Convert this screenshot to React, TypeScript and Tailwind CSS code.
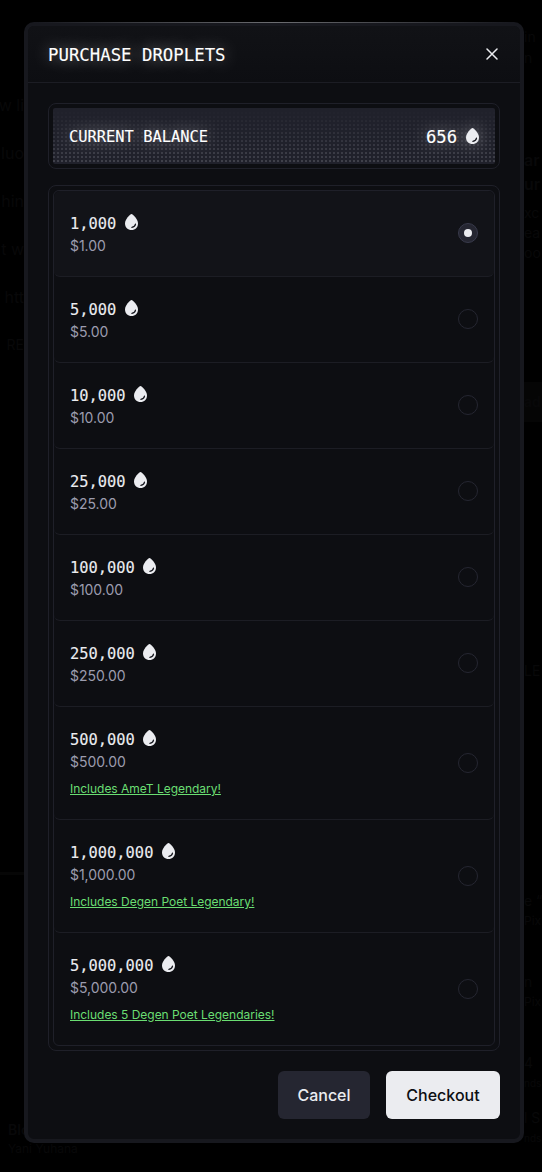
interface Pack {
  id: number
  amount: string
  price: string
  bonus?: string
}

const packs: Pack[] = [
  { id: 1, amount: '1,000', price: '$1.00' },
  { id: 2, amount: '5,000', price: '$5.00' },
  { id: 3, amount: '10,000', price: '$10.00' },
  { id: 4, amount: '25,000', price: '$25.00' },
  { id: 5, amount: '100,000', price: '$100.00' },
  { id: 6, amount: '250,000', price: '$250.00' },
  { id: 7, amount: '500,000', price: '$500.00', bonus: 'Includes AmeT Legendary!' },
  { id: 8, amount: '1,000,000', price: '$1,000.00', bonus: 'Includes Degen Poet Legendary!' },
  { id: 9, amount: '5,000,000', price: '$5,000.00', bonus: 'Includes 5 Degen Poet Legendaries!' },
]

function Droplet({ className = '' }: { className?: string }) {
  return (
    <svg className={`w-[13px] h-4 flex-shrink-0 ${className}`} viewBox="0 0 13 16" fill="none">
      <path
        d="M6.5 0C5 0.2 0 5.2 0 9.4C0 13.2 2.8 16 6.5 16S13 13.2 13 9.4C13 5.2 8 0.2 6.5 0Z"
        fill="#ebecf0"
      />
      <path d="M6.9 13.4C8.8 13.1 10.2 12 10.5 10.2" stroke="#17181f" strokeWidth={1.2} strokeLinecap="round" />
    </svg>
  )
}

function PackRow({ pack, selected }: { pack: Pack; selected: boolean }) {
  return (
    <div
      className={`flex items-center justify-between px-4 rounded-md border-b border-[#1c1d24] last:border-b-0 ${
        pack.bonus ? 'h-[113px] last:h-28' : 'h-[86px]'
      } ${selected ? 'bg-[#121318]' : ''}`}
    >
      <div className={`flex flex-col ${pack.bonus ? 'pb-px' : ''}`}>
        <div className="flex items-center gap-[8.5px] h-6">
          <span className="pt-0.5 font-['DejaVu_Sans_Mono',monospace] text-[15.4px] leading-6 text-[#ebecf0] [-webkit-text-stroke:0.12px_#ebecf0]">
            {pack.amount}
          </span>
          <Droplet className="mb-0.5" />
        </div>
        <span className="text-sm leading-[21px] tracking-[-0.05px] text-[#9c9cae]">{pack.price}</span>
        {pack.bonus && (
          <span className="-mt-px pt-2 text-xs leading-[19px] tracking-[-0.02px] text-[#6ade72] underline">
            {pack.bonus}
          </span>
        )}
      </div>
      <div
        className={`flex items-center justify-center w-5 h-5 rounded-full border ${pack.bonus ? '' : 'mb-0.5'} ${
          selected ? 'bg-[#252631] border-[#383a4b]' : 'border-[#252631]'
        }`}
      >
        {selected && <div className="w-2 h-2 rounded-full bg-[#ebecf0]" />}
      </div>
    </div>
  )
}

/* Page content dimmed behind the dialog */
function Backdrop() {
  return (
    <div className="absolute inset-0 flex justify-between overflow-hidden whitespace-nowrap text-base text-[#080809]">
      <div className="w-20 pt-[81px]">
        <div className="w-6 h-[288px] flex flex-col items-end leading-[48px]">
          <span>w li</span>
          <span>luo</span>
          <span>hin</span>
          <span>t w</span>
          <span>htt</span>
          <span className="text-sm leading-[48px]">RE</span>
        </div>
        <div className="mt-[503px] w-full h-[3px] bg-[#060606]" />
        <div className="mt-[245px] pl-2 text-sm leading-[19px]">
          <div className="font-semibold">Blo</div>
          <div className="text-xs leading-[19px]">Yani Yuhana</div>
        </div>
      </div>
      <div className="w-[18px] flex flex-col pt-[26px] text-sm">
        <span className="leading-[21px]">in</span>
        <span className="leading-[21px]">n</span>
        <span className="mt-20 text-base leading-6 font-semibold">ar</span>
        <span className="text-base leading-6 font-semibold">ur</span>
        <span className="mt-[7px] leading-5">xc</span>
        <span className="leading-5">ea</span>
        <span className="leading-5">oo</span>
        <span className="mt-[119px] h-10 leading-10 font-semibold bg-[#050505]">ad</span>
        <span className="mt-[239px] leading-5">LE</span>
        <span className="mt-[210px] leading-5">e “</span>
        <span className="text-xs leading-5">Pix</span>
        <span className="mt-[41px] leading-5">n</span>
        <span className="text-xs leading-5">Pix</span>
        <span className="mt-[41px] leading-5">4</span>
        <span className="text-[10px] leading-5">nds</span>
        <span className="mt-[15px] leading-5">l S</span>
        <span className="text-[10px] leading-5">nds</span>
      </div>
    </div>
  )
}

export default function App() {
  return (
    <div className="relative w-[542px] h-[1172px] pt-[22px] pl-6 overflow-hidden bg-black font-['Inter',sans-serif]">
      <Backdrop />
      <div className="relative w-[500px] h-[1121px] flex flex-col rounded-[10px] border-4 border-[#17181e] bg-[#0d0e12]">
        {/* Highlight along the top edge */}
        <div className="absolute -top-1 left-2 right-2 h-px bg-linear-to-r from-transparent via-[#6b6c70] to-transparent" />

        {/* Header */}
        <div className="flex items-center justify-between h-[57px] pl-5 pr-[22px] border-b border-[#1c1d24] rounded-t-md bg-linear-to-b from-[#111216] to-[#0d0e12]">
          <h2 className="pt-0.5 font-['DejaVu_Sans_Mono',monospace] text-[17.35px] leading-6 text-white [-webkit-text-stroke:0.12px_white] [text-shadow:0_0_16px_rgba(255,255,255,0.5)]">
            PURCHASE DROPLETS
          </h2>
          <svg className="w-3 h-3" viewBox="0 0 12 12" fill="none">
            <path d="M1 1L11 11M11 1L1 11" stroke="#ebecf0" strokeWidth={1.5} strokeLinecap="round" />
          </svg>
        </div>

        <div className="flex flex-col gap-4 px-5 pt-5">
          {/* Balance */}
          <div className="p-1 rounded-lg border border-[#1f2029]">
            <div className="relative h-14 flex items-center justify-between px-4 rounded-xs bg-[#20212b]">
              <div className="absolute inset-0 bg-[linear-gradient(#41424c_2px,transparent_2px)] bg-[length:4px_4px] [mask-image:linear-gradient(90deg,black_2px,transparent_2px),linear-gradient(to_bottom,transparent,black)] [mask-size:4px_4px,100%_100%] [mask-composite:intersect]" />
              <span className="relative pt-[3px] font-['DejaVu_Sans_Mono',monospace] text-[15.4px] text-white [-webkit-text-stroke:0.12px_white] [text-shadow:0_0_16px_rgba(255,255,255,0.5)]">
                CURRENT BALANCE
              </span>
              <div className="relative flex items-center gap-[9px]">
                <span className="pt-[3px] font-['DejaVu_Sans_Mono',monospace] text-[17.2px] text-white [-webkit-text-stroke:0.12px_white] [text-shadow:0_0_16px_rgba(255,255,255,0.5)]">
                  656
                </span>
                <Droplet className="drop-shadow-[0_0_8px_rgba(255,255,255,0.4)]" />
              </div>
            </div>
          </div>

          {/* Packs */}
          <div className="p-1 rounded-lg border border-[#1f2029]">
            <div className="rounded-md border border-[#1f2029]">
              {packs.map((pack) => (
                <PackRow key={pack.id} pack={pack} selected={pack.id === 1} />
              ))}
            </div>
          </div>
        </div>

        {/* Actions */}
        <div className="flex justify-end gap-4 px-5 pt-5">
          <button className="w-[92px] h-12 rounded-md bg-[#252631] text-base font-medium text-[#ebecf0]">Cancel</button>
          <button className="w-[114px] h-12 rounded-md bg-[#ebecf0] text-base font-medium text-[#0d0e12]">
            Checkout
          </button>
        </div>
      </div>
    </div>
  )
}
